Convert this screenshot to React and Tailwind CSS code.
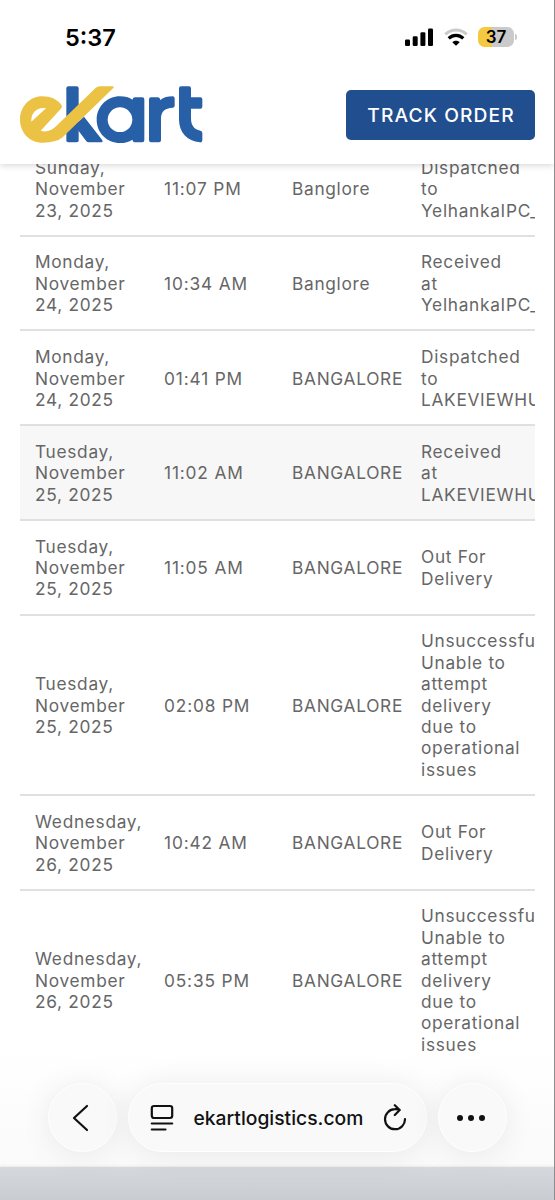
import React from 'react';

const shipmentEvents = [
  { date: 'Sunday, November 23, 2025', time: '11:07 PM', place: 'Banglore', status: 'Dispatched to YelhankaIPC_' },
  { date: 'Monday, November 24, 2025', time: '10:34 AM', place: 'Banglore', status: 'Received at YelhankaIPC_' },
  { date: 'Monday, November 24, 2025', time: '01:41 PM', place: 'BANGALORE', status: 'Dispatched to LAKEVIEWHU' },
  { date: 'Tuesday, November 25, 2025', time: '11:02 AM', place: 'BANGALORE', status: 'Received at LAKEVIEWHU', active: true },
  { date: 'Tuesday, November 25, 2025', time: '11:05 AM', place: 'BANGALORE', status: 'Out For Delivery' },
  { date: 'Tuesday, November 25, 2025', time: '02:08 PM', place: 'BANGALORE', status: 'Unsuccessfu Unable to attempt delivery due to operational issues' },
  { date: 'Wednesday, November 26, 2025', time: '10:42 AM', place: 'BANGALORE', status: 'Out For Delivery' },
  { date: 'Wednesday, November 26, 2025', time: '05:35 PM', place: 'BANGALORE', status: 'Unsuccessfu Unable to attempt delivery due to operational issues' },
];

const StatusBar = () => (
  <div className="flex h-[74px] items-center justify-between pl-[65px] pr-[37px]">
    <span className="pt-px text-[23.5px] leading-none font-semibold text-black">5:37</span>
    <div className="flex items-center">
      <svg className="h-[18px] w-[28px]" viewBox="0 0 28 18">
        <rect x="0" y="11.5" width="5" height="6.5" rx="1.3" />
        <rect x="7.7" y="8.3" width="5" height="9.7" rx="1.3" />
        <rect x="15.4" y="4.3" width="5" height="13.7" rx="1.3" />
        <rect x="23" y="0.5" width="5" height="17.5" rx="1.3" />
      </svg>
      <svg className="ml-[11px] h-[18px] w-[24px]" viewBox="0 0 24 18" fill="none" strokeWidth="3">
        <path d="M1.3 6.3 C7.3 .6 16.7 .6 22.7 6.3" stroke="#cbcbcb" />
        <path d="M4.7 10.4 C9 6.4 15 6.4 19.3 10.4" stroke="#000" strokeWidth="3.3" />
        <path d="M8.3 14.2 C10.3 12.2 13.7 12.2 15.7 14.2 L12 17.8 Z" fill="#000" />
      </svg>
      <div className="ml-[10px] flex h-[20px] w-[36px] items-center justify-center rounded-[6.5px] bg-[linear-gradient(90deg,#f3c941_38%,#cacaca_38%)] text-[17px] leading-none font-semibold text-black">
        37
      </div>
      <span className="ml-px h-[6px] w-[2px] rounded-r-full bg-[#cacaca]" />
    </div>
  </div>
);

const Logo = () => (
  <svg className="h-[57px] w-[183px]" viewBox="60 50 549 171">
    <g fill="#2860a8">
      <rect x="199" y="51" width="37" height="168" rx="6" />
      <path d="M223 168 L252 142 L306 211 Q311 219 302 219 L267 219 Q261 219 258 214 Z" />
      <path
        fillRule="evenodd"
        d="M360 81 C375 81 387 84 397 91 Q399 84 405 84 L427 84 Q433 84 433 90 L433 213 Q433 219 427 219 L405 219 Q399 219 397 211 C387 218 375 221 360 221 C321 221 290 190 290 151 C290 112 321 81 360 81 Z M360 114 A37 37 0 1 0 360 188 A37 37 0 1 0 360 114 Z"
      />
      <path d="M453 84 H474 Q480 84 481 92 C491 84 503 81 518 81 Q524 81 524 87 V109 Q524 115 518 115 C494 116 483 128 483 147 V213 Q483 219 477 219 H453 Q447 219 447 213 V90 Q447 84 453 84 Z" />
      <path d="M543 51 H567 Q573 51 573 57 V84 H601 Q607 84 607 90 V112 Q607 118 601 118 H573 V147 C573 169 583 181 601 184 Q607 185 607 191 V213 Q607 220 600 219 C561 216 537 190 537 150 V57 Q537 51 543 51 Z" />
    </g>
    <path
      fill="#ebc244"
      fillRule="evenodd"
      d="M127 81 C151 81 174 91 185 108 Q188 114 182 119 L122 184 Q137 190 154 181 Q162 177 169 170 L286 57 Q292 51 300 51 H336 Q345 51 339 57 L188 204 Q169 220 128 220 C89 220 60 190 60 151 C60 112 89 81 127 81 Z M138 117 C113 112 92 130 94 157 Z"
    />
  </svg>
);

const Header = () => (
  <header className="relative z-10 h-[164px] shrink-0 bg-white shadow-[0_1px_7px_rgba(0,0,0,0.18)]">
    <StatusBar />
    <div className="flex items-center justify-between pt-[12px] pr-[19px] pl-[20px]">
      <Logo />
      <button
        type="button"
        className="mt-px h-[50px] w-[189px] rounded-[5px] bg-[#214e8e] pl-px text-[19.2px] font-medium tracking-[1.1px] whitespace-nowrap text-white"
      >
        TRACK ORDER
      </button>
    </div>
  </header>
);

const EventRow = ({ event }) => (
  <div
    className={`grid grid-cols-[129px_128.5px_128.5px_128.5px] items-center border-b-2 border-[#e0e0e0] pt-[14.75px] pb-[13.75px] last:border-transparent ${
      event.active ? 'bg-[#f7f7f7]' : 'bg-white'
    }`}
  >
    <span className="w-[110px] pl-[15px]">{event.date}</span>
    <span className="pl-[15px] tracking-[0.85px] whitespace-nowrap">{event.time}</span>
    <span className="pl-[14.5px] whitespace-nowrap">{event.place}</span>
    <span className="pr-[12px] pl-[15px]">{event.status}</span>
  </div>
);

const BrowserBar = () => (
  <div className="absolute inset-x-0 bottom-0 z-20">
    <div className="flex h-[117px] items-start justify-center gap-[11px] bg-linear-to-b from-white/0 to-[#fafafa] pt-[33px]">
      <button
        type="button"
        className="flex size-[69px] items-center justify-center rounded-full border border-white bg-[#f9f9f9] shadow-[0_2px_32px_rgba(0,0,0,0.08)]"
      >
        <svg className="mr-[2px] h-[28px] w-[18px]" viewBox="0 0 18 28" fill="none" stroke="#111" strokeWidth="2.2" strokeLinecap="round" strokeLinejoin="round">
          <path d="M15 2 L2 14 L15 26" />
        </svg>
      </button>
      <div className="flex h-[69px] w-[299px] items-center rounded-full border border-white bg-[#f9f9f9] pr-[19px] pl-[21px] shadow-[0_2px_32px_rgba(0,0,0,0.08)]">
        <svg className="h-[28px] w-[24px]" viewBox="0 0 24 28" fill="none" stroke="#111" strokeWidth="2.2" strokeLinecap="round">
          <rect x="1.8" y="2" width="20.4" height="12" rx="2.2" />
          <path d="M1.8 19.5 H22.2 M1.8 25.5 H15.5" />
        </svg>
        <span className="ml-[20px] pt-px text-[19.3px] font-medium text-[#111]">ekartlogistics.com</span>
        <svg className="ml-auto h-[28px] w-[24px]" viewBox="0 0 24 28" fill="none" stroke="#111" strokeWidth="2.2" strokeLinecap="round" strokeLinejoin="round">
          <path d="M22 15 A10 10 0 1 1 12 5.2 Q14.5 5.1 16.7 6 M11.8 1.2 L16.7 6 L11.8 11" />
        </svg>
      </div>
      <button
        type="button"
        className="flex size-[69px] items-center justify-center gap-[5px] rounded-full border border-white bg-[#f9f9f9] pr-[2px] shadow-[0_2px_32px_rgba(0,0,0,0.08)]"
      >
        <span className="size-[6px] rounded-full bg-[#111]" />
        <span className="size-[6px] rounded-full bg-[#111]" />
        <span className="size-[6px] rounded-full bg-[#111]" />
      </button>
    </div>
    <div className="h-[33px] bg-linear-to-b from-[#d5d8dc] to-[#c9cdd2] shadow-[0_0_3px_#d5d8dc]" />
  </div>
);

export default function App() {
  return (
    <div className="relative flex h-[1200px] w-[555px] flex-col overflow-hidden border-r border-[#8d8d8d] bg-white font-['Inter',sans-serif]">
      <Header />
      <main className="mt-[-22px] mr-[19px] ml-[20px] overflow-hidden text-[17.3px] leading-[21.4px] tracking-[0.7px] text-[#666]">
        {shipmentEvents.map((event) => (
          <EventRow key={`${event.date}-${event.time}`} event={event} />
        ))}
      </main>
      <BrowserBar />
    </div>
  );
}
